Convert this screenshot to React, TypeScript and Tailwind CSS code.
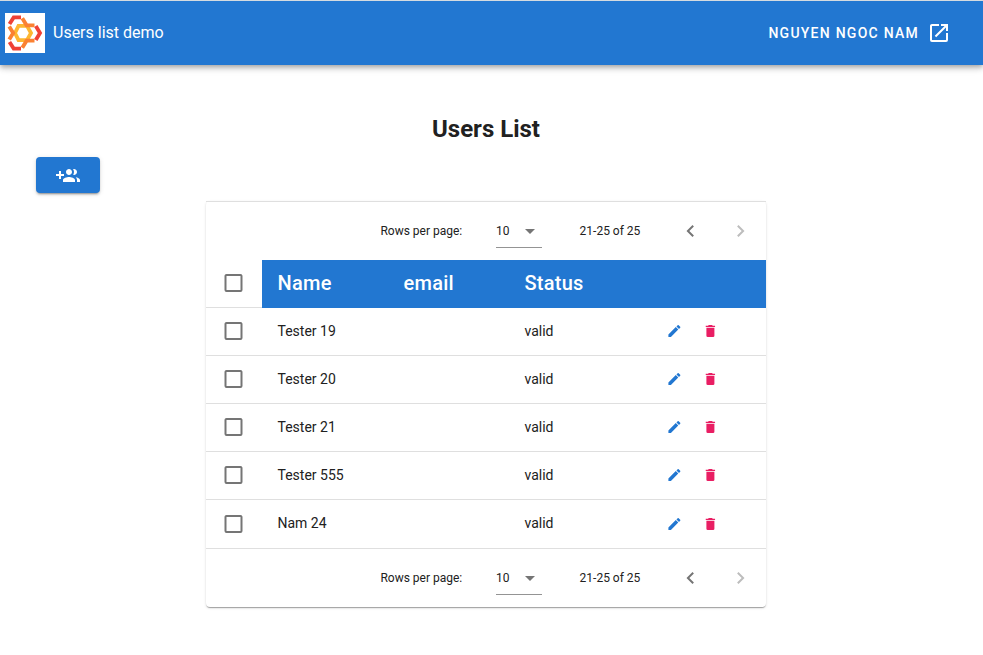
import React from "react";

const icons = {
  open: "M14,3V5H17.59L7.76,14.83L9.17,16.24L19,6.41V10H21V3M19,19H5V5H12V3H5C3.89,3 3,3.9 3,5V19A2,2 0 0,0 5,21H19A2,2 0 0,0 21,19V12H19V19Z",
  addUsers:
    "M13 13C11 13 7 14 7 16V18H19V16C19 14 15 13 13 13M19.62 13.16C20.45 13.88 21 14.82 21 16V18H24V16C24 14.46 21.63 13.5 19.62 13.16M13 11C14.66 11 16 9.66 16 8C16 6.34 14.66 5 13 5C11.34 5 10 6.34 10 8C10 9.66 11.34 11 13 11M18 11C19.66 11 21 9.66 21 8C21 6.34 19.66 5 18 5C17.68 5 17.37 5.05 17.08 5.14C17.65 5.95 18 6.94 18 8C18 9.06 17.65 10.04 17.08 10.85C17.37 10.95 17.68 11 18 11M8 10H5V7H3V10H0V12H3V15H5V12H8V10Z",
  checkbox:
    "M19,3H5C3.89,3 3,3.89 3,5V19A2,2 0 0,0 5,21H19A2,2 0 0,0 21,19V5C21,3.89 20.1,3 19,3M19,5V19H5V5H19Z",
  pencil:
    "M20.71,7.04C21.1,6.65 21.1,6 20.71,5.63L18.37,3.29C18,2.9 17.35,2.9 16.96,3.29L15.12,5.12L18.87,8.87M3,17.25V21H6.75L17.81,9.93L14.06,6.18L3,17.25Z",
  trash: "M19,4H15.5L14.5,3H9.5L8.5,4H5V6H19M6,19A2,2 0 0,0 8,21H16A2,2 0 0,0 18,19V7H6V19Z",
  menuDown: "M7,10L12,15L17,10H7Z",
  left: "M15.41,16.58L10.83,12L15.41,7.41L14,6L8,12L14,18L15.41,16.58Z",
  right: "M8.59,16.58L13.17,12L8.59,7.41L10,6L16,12L10,18L8.59,16.58Z",
};

function Icon({ name, className }: { name: keyof typeof icons; className: string }) {
  return (
    <svg viewBox="0 0 24 24" fill="currentColor" className={`block shrink-0 ${className}`}>
      <path d={icons[name]} />
    </svg>
  );
}

function Logo() {
  return (
    <svg viewBox="0 0 40 40" fill="none" className="block h-10 w-10 bg-white">
      <path d="M13.5 12.8H22L26 20L22 27.2H13.5L10 20Z" stroke="#fdb731" strokeWidth="3.8" />
      <g strokeWidth="3.8">
        <path d="M4.5 11L8.7 4.4H16" stroke="#ef4136" />
        <path d="M4.5 29L8.7 35.6H16" stroke="#ef4136" />
        <path d="M30.8 13L35 20L30.8 27" stroke="#ef4136" />
        <path d="M17.3 5.2L21.6 12.3H29.5" stroke="#fb8132" />
        <path d="M17.3 34.8L21.6 27.7H29.5" stroke="#fb8132" />
        <path d="M4.2 13.5L8.2 20L4.2 26.5" stroke="#fb8132" />
      </g>
    </svg>
  );
}

function Pagination() {
  return (
    <div className="flex h-[59px] items-center border-t border-[#dfdfdf] pl-[174.4px] text-xs">
      <span className="w-[115.6px] whitespace-nowrap">Rows per page:</span>
      <div className="mt-px flex h-8 w-[46px] items-center justify-between border-b border-[#949494]">
        <span>10</span>
        <Icon name="menuDown" className="h-6 w-6 text-[#757575]" />
      </div>
      <span className="ml-[37.6px] w-[98.4px] whitespace-nowrap">21-25 of 25</span>
      <Icon name="left" className="h-6 w-6 translate-x-[0.5px] text-[#757575]" />
      <Icon name="right" className="ml-[26px] h-6 w-6 translate-x-[0.5px] text-[#bdbdbd]" />
    </div>
  );
}

const users = ["Tester 19", "Tester 20", "Tester 21", "Tester 555", "Nam 24"];

export default function App() {
  return (
    <div className="h-[655px] overflow-hidden bg-white font-[Roboto,sans-serif] text-[#212121]">
      <header className="flex h-[65px] items-center justify-between border-t border-[#d5dbe0] bg-[#2277d1] pl-[5px] pr-8 text-white shadow-[0_2px_4px_-1px_rgba(0,0,0,0.2),0_4px_5px_0_rgba(0,0,0,0.14),0_1px_10px_0_rgba(0,0,0,0.12)]">
        <div className="flex items-center gap-2">
          <Logo />
          <span className="text-base">Users list demo</span>
        </div>
        <div className="flex items-center gap-2">
          <span className="text-sm font-medium tracking-[1.25px]">NGUYEN NGOC NAM</span>
          <Icon name="open" className="h-6 w-6" />
        </div>
      </header>
      <main>
        <h1 className="mt-12 pr-[11px] text-center text-2xl leading-8 font-bold">Users List</h1>
        <button className="mt-3 ml-9 flex h-9 w-16 items-center justify-center rounded bg-[#2277d1] text-white shadow-[0_3px_1px_-2px_rgba(0,0,0,0.2),0_2px_2px_0_rgba(0,0,0,0.14),0_1px_5px_0_rgba(0,0,0,0.12)]">
          <Icon name="addUsers" className="mt-px h-6 w-6" />
        </button>
        <section className="mt-2 ml-[206px] w-[560px] rounded bg-white shadow-[0_2px_1px_-1px_rgba(0,0,0,0.2),0_1px_1px_0_rgba(0,0,0,0.14),0_1px_3px_0_rgba(0,0,0,0.12)]">
          <Pagination />
          <div className="flex h-12">
            <div className="flex w-14 items-center justify-center border-b border-[#dfdfdf] pb-px">
              <Icon name="checkbox" className="h-6 w-6 -translate-x-[0.5px] text-[#757575]" />
            </div>
            <div className="grid flex-1 grid-cols-[126px_121px_1fr] items-center bg-[#2277d1] pb-0.5 pl-[15.5px] text-xl font-medium tracking-[0.25px] text-white">
              <span>Name</span>
              <span>email</span>
              <span>Status</span>
            </div>
          </div>
          {users.map((user, index) => {
            const last = index === users.length - 1;
            return (
              <div key={user} className={`flex h-12 items-center text-sm ${last ? "" : "border-b border-[#dfdfdf] pb-px"}`}>
                <div className="flex w-14 justify-center">
                  <Icon name="checkbox" className="h-6 w-6 -translate-x-[0.5px] text-[#757575]" />
                </div>
                <span className={`ml-[15.5px] w-[247px] ${last ? "pb-0.5" : ""}`}>{user}</span>
                <span className={`w-[141.5px] ${last ? "pb-0.5" : ""}`}>valid</span>
                <Icon name="pencil" className="h-4 w-4 translate-x-[0.4px] text-[#2277d1]" />
                <Icon name="trash" className="ml-5 h-4 w-4 translate-x-[0.4px] text-[#e91e63]" />
              </div>
            );
          })}
          <Pagination />
        </section>
      </main>
    </div>
  );
}
